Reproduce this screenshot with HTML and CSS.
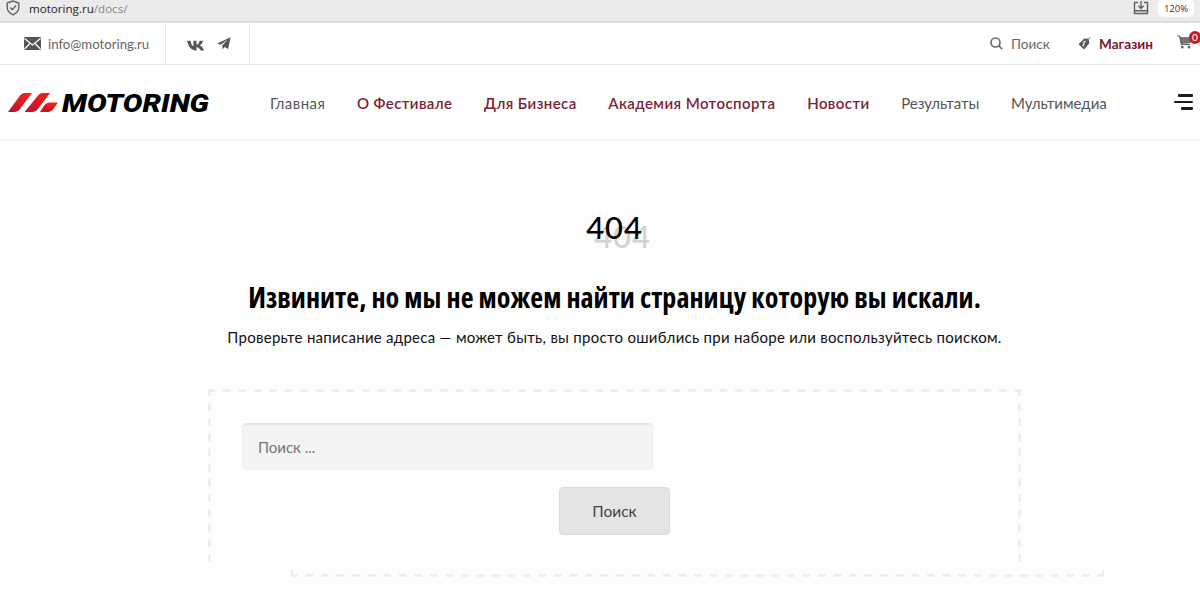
FILE: index.html
```html
<!DOCTYPE html>
<html lang="ru">
<head>
  <meta charset="UTF-8">
  <meta name="viewport" content="width=device-width, initial-scale=1.0">
  <title>Motoring - 404</title>
  <link rel="stylesheet" href="styles.css">
</head>
<body>
  <div class="browser-bar">
    <svg class="shield" viewBox="0 0 14 16" fill="none" stroke="#65656a" stroke-width="1.4" stroke-linejoin="round">
      <path d="M7 1l5.8 2v4.5c0 3.5-2.6 5.8-5.8 7.3C3.8 13.3 1.2 11 1.2 7.5V3z"></path>
      <path d="M4.2 7.6l2.1 2.1 3.7-4.2"></path>
    </svg>
    <span class="url">motoring.ru<span class="url-path">/docs/</span></span>
    <svg class="install" viewBox="0 0 16 14" fill="none" stroke="#606067" stroke-width="1.4">
      <path d="M5 1.5H1.5v11h13v-11H11M1.5 9.8h13M8 0v7M5.3 4.7L8 7.4l2.7-2.7"></path>
    </svg>
    <span class="zoom">120%</span>
  </div>

  <div class="topbar">
    <a class="mail" href="#">
      <svg class="mail-icon" viewBox="0 0 17 13">
        <rect width="17" height="13" rx="1" fill="#555"></rect>
        <path d="M.5 1.5l8 6.5 8-6.5M.5 12l5.5-5.5M16.5 12L11 6.5" fill="none" stroke="#fff" stroke-width="1.2"></path>
      </svg>
      <span class="mail-text">info@motoring.ru</span>
    </a>
    <div class="social">
      <svg class="vk-icon" viewBox="0 0 18 11" fill="#555">
        <path d="M9.8 10.5C4.2 10.5 1.2 6.7.2.7h3.3c.4 3 1.7 5 2.9 5.6V.7h3.1v4.1c1.4-.3 2.7-2 3.2-4.1h3.2c-.4 2-1.7 3.7-3 4.7 1.6.8 3.2 2.3 4.1 5.1h-3.4c-.6-1.8-2-3.2-4.1-3.5v3.5z"></path>
      </svg>
      <svg class="tg-icon" viewBox="0 0 14 13" fill="#555">
        <path d="M13.6.2L.2 6.4l3.5 1.4 7-5.3-5.4 6.1v4l2.2-2.5 3.6 2z"></path>
      </svg>
    </div>
    <div class="tools">
      <a class="find" href="#">
        <svg class="find-icon" viewBox="0 0 13 13" fill="none" stroke="#666" stroke-width="1.6">
          <circle cx="5.5" cy="5.5" r="4.5"></circle>
          <path d="M8.7 8.7l3.6 3.6"></path>
        </svg>
        <span>Поиск</span>
      </a>
      <a class="shop" href="#">
        <svg class="tag-icon" viewBox="0 0 13 13">
          <path d="M.5 7.2L6 1.8l4.5-.3.8 4.7L6 12.6z" fill="#555"></path>
          <path d="M7.5 4.8c-1.8-1-3.2.3-2 1.6 1.4 1.2.3 3-1.5 1.8M7.4 3.7L4.8 9.4" fill="none" stroke="#fff" stroke-width=".8"></path>
          <path d="M9 4l3.4-3.6" stroke="#777" stroke-width="1"></path>
        </svg>
        <span>Магазин</span>
      </a>
      <a class="cart" href="#">
        <svg class="cart-icon" viewBox="0 0 15 14" fill="none" stroke="#666" stroke-width="1.2">
          <path d="M0 1h2.7l1.8 8.3h8.7"></path>
          <path d="M3.2 2.8h10.3l-.8 4.6-8.5.8z" fill="#777"></path>
          <circle cx="5.3" cy="12.2" r=".8" fill="#666"></circle>
          <circle cx="12" cy="12.2" r=".8" fill="#666"></circle>
        </svg>
        <span class="cart-count">0</span>
      </a>
    </div>
  </div>

  <header class="header">
    <svg class="logo" viewBox="0 0 204 34">
      <defs>
        <linearGradient id="red" x1="0" y1="0" x2="0" y2="1">
          <stop offset="0" stop-color="#f02414"></stop>
          <stop offset="1" stop-color="#bd1532"></stop>
        </linearGradient>
      </defs>
      <g fill="url(#red)">
        <path d="M16 8h8L12 24Q10 27 7 27H0L12 10.5Q13.800 8 16 8z"></path>
        <path d="M34 8h8L30 24Q28 27 25 27H16.500L30 10.500Q31.800 8 34 8z"></path>
        <path d="M41 17.500h9L45.500 24Q43.500 27 40.500 27H32L36.500 20Q38.500 17.500 41 17.500z"></path>
      </g>
      <text class="logo-text" x="54" y="27" textLength="147" lengthAdjust="spacingAndGlyphs">MOTORING</text>
    </svg>
    <nav class="menu">
      <a class="home" href="#">Главная</a>
      <a class="accent" href="#">О Фестивале</a>
      <a class="accent" href="#">Для Бизнеса</a>
      <a class="accent" href="#">Академия Мотоспорта</a>
      <a class="accent" href="#">Новости</a>
      <a href="#">Результаты</a>
      <a href="#">Мультимедиа</a>
    </nav>
    <div class="burger">
      <span></span>
      <span></span>
      <span></span>
    </div>
  </header>

  <main class="content">
    <div class="code">404</div>
    <h1>Извините, но мы не можем найти страницу которую вы искали.</h1>
    <p class="hint">Проверьте написание адреса — может быть, вы просто ошиблись при наборе или воспользуйтесь поиском.</p>
    <form class="search">
      <svg class="dashes" viewBox="0 0 898 190" fill="none" stroke="#ebebeb" stroke-width="2.5">
        <path d="M1.5 173V0M811.5 173V0" stroke-dasharray="7.5 7.6"></path>
        <path d="M0 1.5h813" stroke-dasharray="7.5 8.03" stroke-dashoffset=".8"></path>
        <path d="M83 186.5h813" stroke-dasharray="7.5 8.03" stroke-dashoffset=".8"></path>
        <path d="M84 181v6M895 181v6" stroke-width="2"></path>
      </svg>
      <input class="field" type="text" placeholder="Поиск ...">
      <button class="submit" type="button">Поиск</button>
    </form>
  </main>
</body>
</html>
```

FILE: styles.css
```css
* {
  box-sizing: border-box;
}

body {
  margin: 0;
  height: 615px;
  overflow: hidden;
  background: #fdfdfd;
  color: #111;
  font-family: Lato, "Open Sans", sans-serif;
}

a {
  color: inherit;
  text-decoration: none;
}

svg {
  display: block;
  flex: none;
}

.browser-bar {
  display: flex;
  align-items: center;
  height: 23px;
  padding: 0 6px 5px;
  background: #ebebec;
  border-bottom: 2px solid #dedede;
  font-family: "Open Sans", sans-serif;
}

.shield {
  width: 14px;
  height: 16px;
  margin-right: 9px;
}

.url {
  font-size: 11.6px;
  line-height: 16px;
  padding-top: 2px;
  color: #222;
}

.url-path {
  color: #888;
}

.install {
  width: 16px;
  height: 14px;
  margin: 0 9px 0 auto;
}

.zoom {
  width: 36px;
  height: 18px;
  border-radius: 5px;
  background: #fff;
  font-size: 9.5px;
  line-height: 19px;
  text-align: center;
  color: #333;
}

.topbar {
  display: flex;
  height: 42px;
  background: #fff;
  border-bottom: 1px solid #e7e7e7;
  color: #666;
  font-size: 13.6px;
}

.mail {
  display: flex;
  align-items: center;
  gap: 7px;
  width: 166px;
  padding-left: 24px;
  border-right: 1px solid #e7e7e7;
}

.mail-icon {
  width: 17px;
  height: 13px;
}

.mail-text {
  font-size: 13.2px;
}

.social {
  display: flex;
  align-items: center;
  gap: 12px;
  width: 84px;
  padding-left: 21px;
  border-right: 1px solid #e7e7e7;
}

.vk-icon {
  width: 18px;
  height: 11px;
  margin-top: 3px;
}

.tg-icon {
  width: 14px;
  height: 13px;
}

.tools {
  display: flex;
  align-items: center;
  margin-left: auto;
}

.find,
.shop {
  display: flex;
  align-items: center;
  gap: 8px;
}

.find {
  width: 88px;
}

.shop {
  width: 99px;
  color: #80122d;
  font-weight: 700;
}

.find-icon,
.tag-icon {
  width: 13px;
  height: 13px;
}

.cart {
  position: relative;
  width: 23px;
  padding-bottom: 4px;
}

.cart-icon {
  width: 15px;
  height: 14px;
}

.cart-count {
  position: absolute;
  top: -4px;
  left: 12px;
  width: 12px;
  height: 13px;
  border-radius: 6px;
  background: #c91d25;
  color: #fff;
  font-size: 10px;
  line-height: 13px;
  text-align: center;
}

.header {
  display: flex;
  align-items: center;
  height: 75px;
  padding: 0 7px 0 8px;
  background: #fff;
  border-bottom: 1px solid #f5f5f5;
}

.logo {
  width: 204px;
  height: 34px;
  overflow: visible;
}

.logo-text {
  font-family: Roboto, sans-serif;
  font-size: 26.5px;
  font-style: italic;
  font-weight: 900;
}

.menu {
  display: flex;
  gap: 31.6px;
  margin-left: 58px;
  padding-top: 2px;
  color: #555;
  font-size: 15px;
  white-space: nowrap;
}

.home {
  letter-spacing: 0.45px;
}

.accent {
  color: #7c2234;
  font-weight: 600;
  letter-spacing: 0.42px;
}

.burger {
  display: flex;
  flex-direction: column;
  align-items: flex-end;
  gap: 4px;
  margin-left: auto;
}

.burger span {
  width: 19px;
  height: 2.4px;
  border-radius: 1px;
  background: #1c1c1c;
}

.burger span:first-child {
  width: 15px;
}

.burger span:last-child {
  width: 12px;
}

.content {
  display: flex;
  flex-direction: column;
  align-items: center;
  padding-left: 29px;
  padding-top: 67px;
}

.code {
  height: 40px;
  color: #000;
  font-size: 31px;
  font-weight: 500;
  letter-spacing: 0.8px;
  line-height: 40px;
  text-shadow: 8px 9px 0 #d2d2d2;
}

h1 {
  height: 40px;
  margin: 31px 0 0;
  color: #000;
  font-family: "Open Sans", sans-serif;
  font-size: 28px;
  font-stretch: 75%;
  font-weight: 700;
  letter-spacing: 0.06px;
  line-height: 38px;
  white-space: nowrap;
}

.hint {
  height: 20px;
  margin: 9px 0 0;
  font-size: 15px;
  letter-spacing: 0.28px;
  line-height: 20px;
  white-space: nowrap;
}

.search {
  position: relative;
  display: flex;
  flex-direction: column;
  width: 813px;
  margin-top: 42px;
  padding: 34px;
}

.dashes {
  position: absolute;
  top: 0;
  left: 0;
  width: 898px;
  height: 190px;
}

.field {
  width: 411px;
  height: 47px;
  padding: 0 15px;
  border: 1px solid #eee;
  border-top: 2px solid #e5e5e5;
  border-radius: 5px;
  background: #f4f4f4;
  font-family: inherit;
  font-size: 15px;
}

.field::placeholder {
  color: #777;
}

.submit {
  align-self: center;
  width: 111px;
  height: 48px;
  margin-top: 17px;
  border: 1px solid #dadada;
  border-radius: 4px;
  background: #e4e4e4;
  color: #444;
  font-family: inherit;
  font-size: 15.5px;
}
```
